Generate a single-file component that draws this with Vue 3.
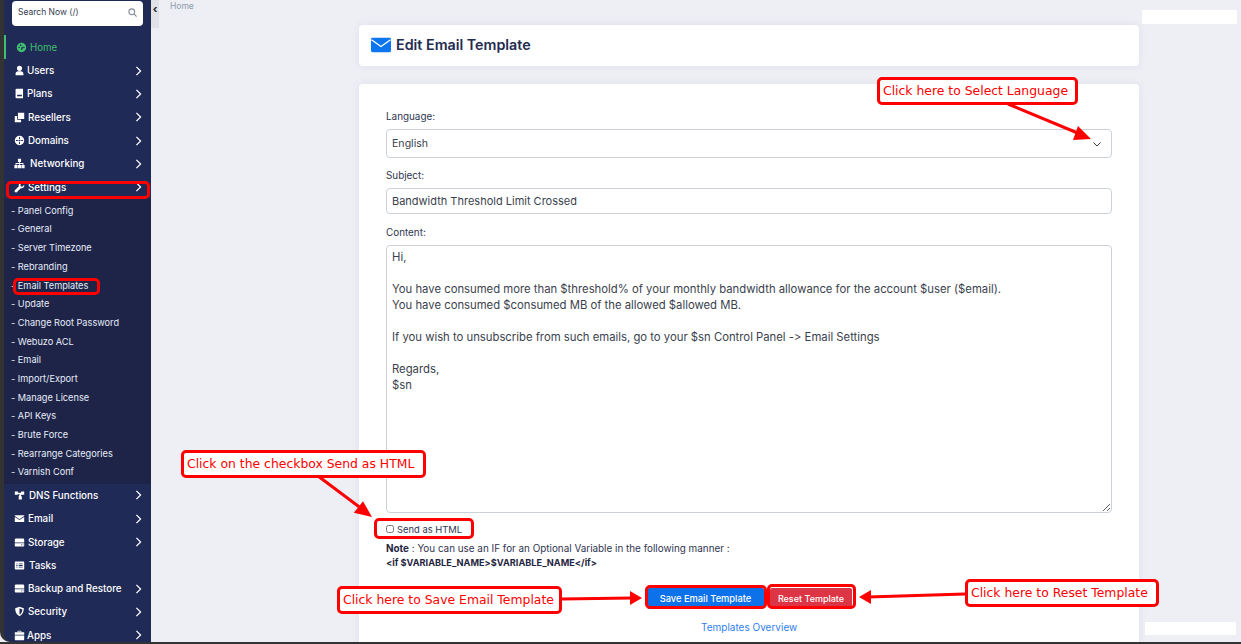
<script setup>
const icons = {
  home: 'M7 1a6 6 0 1 0 0 12A6 6 0 0 0 7 1zM4 8a1 1 0 1 1 0-2 1 1 0 0 1 0 2zm2-3a1 1 0 1 1 0-2 1 1 0 0 1 0 2zm2 5H6l1.500-4L9 6.500zm2-2a1 1 0 1 1 0-2 1 1 0 0 1 0 2z',
  user: 'M7 1a3 3 0 1 1 0 6.500A3 3 0 0 1 7 1zM2 13v-2c0-1.700 1.500-3 3-3h4c1.500 0 3 1.300 3 3v2z',
  book: 'M3 1h8.500v12H3a1 1 0 0 1-1-1V2a1 1 0 0 1 1-1zm1 7.500v2h6v-2z',
  copy: 'M5 1h8v8H5zM1 5h3v5h5v3H1z',
  globe: 'M7 1a6 6 0 1 0 0 12A6 6 0 0 0 7 1zM2.500 6.400h2.300v1.200H2.500zm3.300 0h2.400v1.200H5.800zm3.400 0h2.300v1.200H9.200zM6.400 2.500h1.200v2.800H6.400zm0 6.200h1.200v2.800H6.400z',
  net: 'M5 1h4v4H7.500v1.500H12V9h1.500v4h-4V9H11V7.500H7.500V9H9v4H5V9h1.500V7.500H3V9h1.500v4h-4V9H2V6.500h4.500V5H5z',
  wrench: 'M13 3.500 10.500 6 8.500 5.500 8 3.500 10.500 1C8.500.300 6 1.500 6 4c0 .5.100 1 .2 1.300L1 10.500a1.800 1.800 0 0 0 2.500 2.500l5.200-5.200C11 8.500 13.800 6.500 13 3.500z',
  share: 'M1 2h4v1.500h4V2h4v4H9.500L8.500 8H10v4H6V8l1.500-2.500H5V6H1z',
  mail: 'M1 3h12v.8L7 8 1 3.800zM1 5l6 4 6-4v6.500H1z',
  drive: 'M2.500 2h9A1.500 1.500 0 0 1 13 3.500V7H1V3.500A1.500 1.500 0 0 1 2.500 2zM1 8h12v3a1 1 0 0 1-1 1H2a1 1 0 0 1-1-1zm8 1.500v1h1v-1zm2 0v1h1v-1z',
  tasks: 'M2 2h10a1 1 0 0 1 1 1v8a1 1 0 0 1-1 1H2a1 1 0 0 1-1-1V3a1 1 0 0 1 1-1zm1 2.500v1h1.500v-1zm3 0v1h5v-1zm-3 2v1h1.500v-1zm3 0v1h5v-1zm-3 2v1h1.500v-1zm3 0v1h5v-1z',
  shield: 'M7 1l5.500 2c0 4.500-1.500 8-5.500 10C3 11 1.500 7.500 1.500 3zm0 2v8c2.500-1.500 3.500-4 3.600-6.700z',
  bag: 'M4.500 3V2a1 1 0 0 1 1-1h3a1 1 0 0 1 1 1v1H13v3H1V3zm1 0h3V2h-3zM1 7h12v5a1 1 0 0 1-1 1H2a1 1 0 0 1-1-1z'
}

const topMenu = [
  { label: 'Users', icon: 'user', gap: 2 },
  { label: 'Plans', icon: 'book', gap: 2 },
  { label: 'Resellers', icon: 'copy', gap: 3 },
  { label: 'Domains', icon: 'globe', gap: 3 },
  { label: 'Networking', icon: 'net', gap: 5 },
  { label: 'Settings', icon: 'wrench', gap: 3 }
]

const subMenu = [
  'Panel Config', 'General', 'Server Timezone', 'Rebranding', 'Email Templates', 'Update',
  'Change Root Password', 'Webuzo ACL', 'Email', 'Import/Export', 'Manage License',
  'API Keys', 'Brute Force', 'Rearrange Categories', 'Varnish Conf'
]

const bottomMenu = [
  { label: 'DNS Functions', icon: 'share', arrow: true, gap: 4 },
  { label: 'Email', icon: 'mail', arrow: true, gap: 3 },
  { label: 'Storage', icon: 'drive', arrow: true, gap: 3 },
  { label: 'Tasks', icon: 'tasks', arrow: false, gap: 4 },
  { label: 'Backup and Restore', icon: 'drive', arrow: true, gap: 3 },
  { label: 'Security', icon: 'shield', arrow: true, gap: 3 },
  { label: 'Apps', icon: 'bag', arrow: true, gap: 2 }
]

const body = `Hi,

You have consumed more than $threshold% of your monthly bandwidth allowance for the account $user ($email).
You have consumed $consumed MB of the allowed $allowed MB.

If you wish to unsubscribe from such emails, go to your $sn Control Panel -> Email Settings

Regards,
$sn`
</script>

<template>
  <div class="page">
    <aside class="sidebar">
      <div class="search">
        <span>Search Now (/)</span>
        <svg width="9" height="9" viewBox="0 0 10 10" fill="none" stroke="#8a8f9c" stroke-width="1.300"><circle cx="4.200" cy="4.200" r="3.200"/><path d="M6.700 6.700 9.500 9.500"/></svg>
      </div>
      <div class="home-item">
        <svg class="ico" viewBox="0 0 14 14" fill="#3fbf6f"><path fill-rule="evenodd" :d="icons.home"/></svg>
        <span>Home</span>
      </div>
      <div v-for="m in topMenu" :key="m.label" class="item" :style="{ gap: m.gap + 'px' }">
        <svg class="ico" viewBox="0 0 14 14" fill="#fff"><path fill-rule="evenodd" :d="icons[m.icon]"/></svg>
        <span>{{ m.label }}</span>
        <svg class="chev" viewBox="0 0 8 12" fill="none" stroke="#fff" stroke-width="1.500"><path d="M1.500 1 6.500 6 1.500 11"/></svg>
      </div>
      <ul class="sub">
        <li v-for="s in subMenu" :key="s">- {{ s }}</li>
      </ul>
      <div v-for="m in bottomMenu" :key="m.label" class="item" :style="{ gap: m.gap + 'px' }">
        <svg class="ico" viewBox="0 0 14 14" fill="#fff"><path fill-rule="evenodd" :d="icons[m.icon]"/></svg>
        <span>{{ m.label }}</span>
        <svg v-if="m.arrow" class="chev" viewBox="0 0 8 12" fill="none" stroke="#fff" stroke-width="1.500"><path d="M1.500 1 6.500 6 1.500 11"/></svg>
      </div>
    </aside>

    <div class="toggle">‹</div>

    <main class="main">
      <div class="crumb">Home</div>
      <div class="column">
        <section class="card head">
          <svg width="20" height="16" viewBox="0 0 21 16"><rect width="21" height="15" y="0.500" rx="1.500" fill="#0d75ee"/><path d="M0.500 2.500 10.500 9.500 20.500 2.500" fill="none" stroke="#fff" stroke-width="1.400"/></svg>
          <h1>Edit Email Template</h1>
        </section>

        <section class="card form">
          <label class="lbl">Language:</label>
          <div class="select-wrap">
            <select class="ctl sel"><option>English</option></select>
            <svg class="sel-chev" width="8" height="5" viewBox="0 0 8 5" fill="none" stroke="#343a40" stroke-width="1"><path d="M.5.500 4 4 7.500.500"/></svg>
          </div>
          <label class="lbl l2">Subject:</label>
          <input class="ctl inp" value="Bandwidth Threshold Limit Crossed" />
          <label class="lbl l3">Content:</label>
          <textarea class="ctl area" :value="body"></textarea>
          <label class="check"><input type="checkbox" /><span>Send as HTML</span></label>
          <p class="note"><span><b>Note</b> : You can use an IF for an Optional Variable in the following manner :</span><br /><b class="code">&lt;if $VARIABLE_NAME&gt;$VARIABLE_NAME&lt;/if&gt;</b></p>
          <div class="actions">
            <button class="btn save">Save Email Template</button>
            <button class="btn reset">Reset Template</button>
          </div>
          <a class="overview">Templates Overview</a>
        </section>
      </div>
    </main>

    <!-- annotations laid over the screenshot -->
    <div class="blot b1"></div>
    <div class="blot b2"></div>
    <div class="ring r-settings"></div>
    <div class="ring r-email"></div>
    <div class="ring r-check"></div>
    <div class="ring r-save"></div>
    <div class="ring r-reset"></div>
    <div class="callout c1">Click here to Select Language</div>
    <div class="callout c2">Click on the checkbox Send as HTML</div>
    <div class="callout c3">Click here to Save Email Template</div>
    <div class="callout c4">Click here to Reset Template</div>
    <svg class="arrows" width="1241" height="644" viewBox="0 0 1241 644">
      <g stroke="#f00" stroke-width="3" fill="#f00">
        <path d="M1008 104 1080 134" />
        <path d="M318 476 362 509" />
        <path d="M561 599 632 598" />
        <path d="M965 594 868 597" />
      </g>
      <g fill="#f00">
        <polygon points="1091,139 1073,140 1078,126" />
        <polygon points="372,517 353.800,512.800 363,501.200" />
        <polygon points="642,598 630,591 630,605" />
        <polygon points="859,597 871,590 871,604" />
      </g>
    </svg>
  </div>
</template>

<style>
html, body { margin: 0; padding: 0; overflow: hidden; }
</style>

<style scoped>
* { box-sizing: border-box; }
.page {
  position: relative;
  width: 1241px;
  height: 644px;
  overflow: hidden;
  display: flex;
  background: #eeeff5;
  border-bottom: 2px solid #333;
  font-family: Inter, "Open Sans", sans-serif;
  font-variant-ligatures: none;
  font-feature-settings: "calt" 0, "liga" 0;
}
.sidebar {
  flex: 0 0 151px;
  height: 642px;
  border-left: 4px solid #333;
  background: #1f2a56;
  border-bottom-left-radius: 10px;
  padding-top: 1px;
  overflow: hidden;
  color: #fff;
}
.search {
  margin: 0 8px;
  width: 131px;
  height: 25px;
  background: #fff;
  border-radius: 4px;
  display: flex;
  align-items: center;
  justify-content: space-between;
  padding: 0 6px 3px;
  font-size: 8.500px;
  color: #333a4d;
}
.home-item {
  margin-top: 9px;
  height: 24px;
  border-left: 2px solid #3fbf6f;
  display: flex;
  align-items: center;
  gap: 3px;
  padding-left: 10px;
  color: #3fbf6f;
  font-size: 9.700px;
}
.item {
  height: 23.300px;
  display: flex;
  align-items: center;
  padding: 0 9px 0 10px;
  font-size: 9.800px;
  font-weight: 500;
  position: relative;
}
.ico { width: 11px; height: 11px; flex: none; }
.chev { width: 7px; height: 10px; margin-left: auto; flex: none; }
.sub {
  list-style: none;
  margin: 0;
  padding: 3px 0 3px 7px;
  background: #1e2448;
  height: 285px;
  font-size: 9.200px;
  color: #e6edf8;
}
.sub li { height: 18.700px; line-height: 18.700px; white-space: nowrap; }
.toggle {
  flex: 0 0 8px;
  height: 28px;
  background: #e1e2e7;
  color: #222;
  font-size: 11px;
  font-weight: 700;
  line-height: 18px;
  text-align: center;
}
.main { flex: 1; min-width: 0; position: relative; padding-left: 200px; }
.crumb {
  position: absolute;
  left: 11px;
  top: 1px;
  font-size: 8.500px;
  color: #8d9bab;
}
.column { width: 780px; padding-top: 25px; }
.card { background: #fff; border-radius: 4px; box-shadow: 0 0 8px rgba(40, 45, 80, 0.07); }
.head {
  height: 41px;
  display: flex;
  align-items: center;
  gap: 5px;
  padding: 0 0 2px 12px;
}
.head h1 {
  margin: 0;
  font-size: 14.300px;
  font-weight: 600;
  color: #232b50;
}
.form { margin-top: 18px; height: 600px; padding: 26px 27px 0; display: flex; flex-direction: column; align-items: flex-start; }
.lbl { font-size: 9.900px; line-height: 13px; color: #2f3550; height: 13px; margin-bottom: 6px; }
.l2 { margin-top: 11px; }
.l3 { margin-top: 12px; margin-bottom: 6px; }
.ctl {
  display: block;
  width: 726px;
  border: 1px solid #ccd1d9;
  border-radius: 4px;
  background: #fff;
  font-family: inherit;
  font-size: 11.300px;
  color: #3a3f4d;
  outline: none;
  font-variant-ligatures: none;
  font-feature-settings: "calt" 0, "liga" 0;
}
.select-wrap { position: relative; }
.sel { height: 29px; padding: 0 5px; appearance: none; font-size: 10.600px; }
.sel-chev { position: absolute; right: 11px; top: 13px; }
.inp { height: 26px; padding: 0 5px; font-size: 11px; }
.area { height: 268px; padding: 3px 5px; line-height: 16px; resize: vertical; overflow: hidden; }
.check {
  margin-top: 10px;
  height: 12px;
  display: flex;
  align-items: center;
  gap: 3px;
  font-size: 9.400px;
  color: #2f3550;
}
.check input { margin: 0; width: 8px; height: 8px; }
.note { margin: 6px 0 0; font-size: 9.900px; line-height: 14px; color: #2f3550; white-space: nowrap; }
.note b { color: #1f2540; font-weight: 700; }
.note .code { font-size: 9.200px; }
.actions { margin-top: 18px; margin-left: 261px; display: flex; gap: 6px; }
.btn {
  height: 21px;
  border: 0;
  color: #fff;
  font-family: inherit;
  font-size: 9.300px;
  font-weight: 500;
  padding: 0 0 1px;
  border-radius: 2px;
}
.save { width: 117px; background: #0d72ea; }
.reset { width: 82px; background: #dc3545; font-size: 9px; }
.overview {
  align-self: flex-start;
  margin: 12px 0 0 315px;
  font-size: 10px;
  color: #2f7ff0;
}
.ring { position: absolute; border: 3px solid #f00; border-radius: 5px; }
.r-settings { left: 6px; top: 181px; width: 144px; height: 18px; }
.r-email { left: 13px; top: 278px; width: 87px; height: 17px; }
.r-check { left: 374px; top: 518px; width: 100px; height: 21px; }
.r-save { left: 645px; top: 585px; width: 122px; height: 24px; }
.r-reset { left: 767px; top: 584px; width: 89px; height: 25px; }
.callout {
  position: absolute;
  height: 28px;
  border: 3px solid #f00;
  border-radius: 5px;
  background: #fff;
  color: #f00;
  font-family: "DejaVu Sans", sans-serif;
  font-size: 12.400px;
  line-height: 21px;
  white-space: nowrap;
  padding-left: 3px;
}
.c1 { left: 877px; top: 77px; width: 201px; }
.c2 { left: 181px; top: 450px; width: 245px; }
.c3 { left: 337px; top: 586px; width: 225px; }
.c4 { left: 965px; top: 579px; width: 194px; }
.arrows { position: absolute; left: 0; top: 0; pointer-events: none; }
.blot { position: absolute; background: #fff; }
.b1 { left: 1142px; top: 10px; width: 95px; height: 14px; }
.b2 { left: 1145px; top: 622px; width: 91px; height: 13px; }
</style>
